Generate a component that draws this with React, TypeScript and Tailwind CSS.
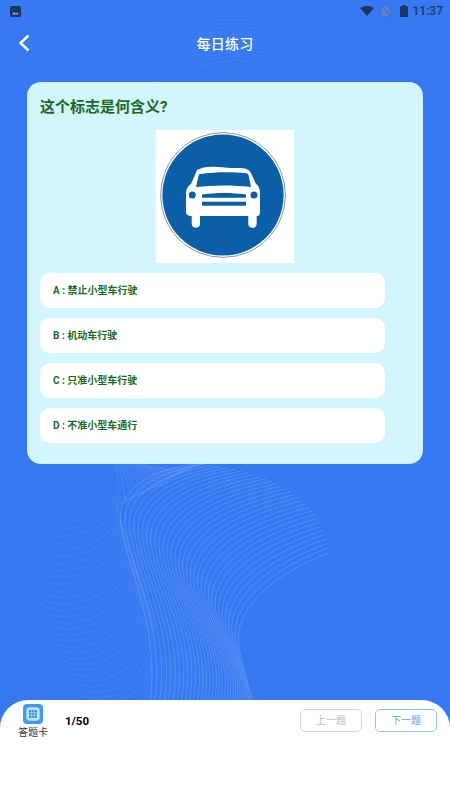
const options = [
  { key: 'A', text: '禁止小型车行驶' },
  { key: 'B', text: '机动车行驶' },
  { key: 'C', text: '只准小型车行驶' },
  { key: 'D', text: '不准小型车通行' },
];

type Pt = [number, number];

// quadratic blend through three key curves, t = 0, 0.5, 1
const blend = (a: number, b: number, c: number, t: number) =>
  a * (2 * t - 1) * (t - 1) + b * 4 * t * (1 - t) + c * t * (2 * t - 1);

function family(k0: Pt[], k1: Pt[], k2: Pt[], count: number) {
  const lines: string[] = [];
  for (let i = 0; i < count; i++) {
    const t = i / (count - 1);
    const p = k0.map((pt, n) =>
      `${blend(pt[0], k1[n][0], k2[n][0], t).toFixed(1)} ${blend(pt[1], k1[n][1], k2[n][1], t).toFixed(1)}`,
    );
    lines.push(`M${p[0]} C${p[1]} ${p[2]} ${p[3]} C${p[4]} ${p[5]} ${p[6]}`);
  }
  return lines;
}

const mainWave = family(
  [[198, 463], [150, 470], [112, 490], [122, 530], [130, 575], [160, 630], [150, 704]],
  [[293, 493], [240, 505], [178, 530], [185, 575], [190, 610], [225, 650], [212, 704]],
  [[328, 553], [285, 570], [238, 600], [238, 640], [240, 660], [248, 680], [253, 704]],
  32,
);
const leftWave = family(
  [[116, 497], [105, 497], [95, 500], [88, 503], [82, 506], [76, 510], [70, 515]],
  [[122, 525], [142, 575], [115, 607], [72, 613], [58, 615], [45, 612], [32, 600]],
  [[135, 575], [175, 650], [150, 690], [120, 700], [110, 703], [100, 704], [90, 704]],
  32,
);
const topWave = family(
  [[115, 463], [120, 480], [118, 490], [118, 505], [125, 500], [165, 485], [195, 463]],
  [[128, 463], [140, 475], [150, 480], [165, 480], [172, 478], [185, 470], [195, 463]],
  [[140, 463], [160, 470], [180, 470], [205, 463], [205, 463], [205, 463], [205, 463]],
  14,
);
const headerWave = family(
  [[185, 25], [200, 18], [225, 15], [245, 16], [255, 17], [265, 19], [272, 22]],
  [[166, 55], [190, 42], [215, 38], [235, 38], [248, 38], [260, 40], [272, 44]],
  [[148, 84], [180, 70], [210, 62], [235, 60], [245, 60], [258, 62], [270, 66]],
  13,
);

function WaveBackground() {
  return (
    <svg className="absolute inset-0" width="450" height="800" viewBox="0 0 450 800" fill="none">
      <g stroke="#ffffff" strokeWidth="1">
        <g opacity="0.15">{mainWave.map((d, i) => <path key={i} d={d} />)}</g>
        <g opacity="0.06">{leftWave.map((d, i) => <path key={i} d={d} />)}</g>
        <g opacity="0.1">{topWave.map((d, i) => <path key={i} d={d} />)}</g>
        <g opacity="0.05">{headerWave.map((d, i) => <path key={i} d={d} />)}</g>
      </g>
    </svg>
  );
}

function StatusBar() {
  return (
    <div className="flex h-[22px] items-center justify-between pl-[10px] pr-[7px] text-[#1d3466]">
      <svg width="11" height="11" viewBox="0 0 11 11">
        <rect width="11" height="11" rx="1.5" fill="#1d3466" />
        <path d="M2 8.5 4 6l1.5 1.6L7 6.6l2 1.9z" fill="#8fa8d8" />
      </svg>
      <div className="flex items-center">
        <svg width="14" height="10" viewBox="0 0 14 10">
          <path d="M0 2C2 0.7 4.5 0 7 0s5 0.7 7 2L7 10z" fill="#1d3466" />
        </svg>
        <svg className="ml-[7px]" width="10" height="12" viewBox="0 0 10 12">
          <path d="M1 1h5l3 3v7H1z" fill="#5f82c8" />
          <path d="M0.5 0.5 9.5 11.5" stroke="#3f61a8" strokeWidth="1" />
        </svg>
        <svg className="ml-[9px]" width="8" height="12" viewBox="0 0 8 12">
          <path d="M2.5 0h3v1.2H8V12H0V1.2h2.5z" fill="#1d3466" />
        </svg>
        <span className="ml-[5px] text-[12px] font-medium leading-none">11:37</span>
      </div>
    </div>
  );
}

function CarSign() {
  return (
    <div className="flex h-[133px] w-[138px] items-start justify-start bg-white pl-[4px] pt-[2px]">
      <svg width="126" height="126" viewBox="0 0 126 126">
        <circle cx="63" cy="63" r="62.4" fill="#ffffff" stroke="#8b97a3" strokeWidth="1" />
        <circle cx="63" cy="63" r="60.6" fill="#0b5ea8" />
        <path
          d="M37 38C42 35 50 34 58 35C64 35.5 70 36 78 36C85 36 89 37 91 41L96 52C99 54 100 57 100 62V80C100 83 99 84 96.7 84V92C96.7 97 88.3 97 88.3 92V84H40V92C40 97 31.7 97 31.7 92V84C28 84 26 82 26 80V62C26 57 28 54 31 52Z"
          fill="#ffffff"
        />
        <path d="M40 42C55 40 72 40 85 41C87 41 88 42 88.5 43L91 55C72 53 54 53 36 55L38.5 44C38.7 43 39 42 40 42Z" fill="#0b5ea8" />
        <circle cx="32.3" cy="63" r="3.5" fill="#0b5ea8" />
        <circle cx="94" cy="63" r="3.5" fill="#0b5ea8" />
        <path d="M42 62.5C56 60.5 72 60.5 86 62.5V65.7H42Z" fill="#0b5ea8" />
        <rect x="42" y="69.7" width="44" height="4" fill="#0b5ea8" />
      </svg>
    </div>
  );
}

function CardIcon() {
  return (
    <div className="flex h-5 w-5 items-center justify-center rounded-[4px] bg-[#3f9cf0]">
      <svg width="14" height="14" viewBox="0 0 14 14" fill="none">
        <rect x="0.7" y="0.7" width="12.6" height="12.6" rx="2.5" fill="#bfe6fb" stroke="#a8dcfa" />
        <rect x="3" y="3" width="8" height="8" fill="#3f8fe6" />
        <path d="M5.7 3v8M8.3 3v8M3 5.7h8M3 8.3h8" stroke="#bfe6fb" strokeWidth="0.6" />
      </svg>
    </div>
  );
}

export default function App() {
  return (
    <div className="relative flex h-[800px] w-full flex-col overflow-hidden bg-[#3779f2] font-['Roboto','Noto_Sans_CJK_SC',sans-serif]">
      <WaveBackground />

      <div className="relative flex flex-1 flex-col">
        <StatusBar />

        {/* Nav */}
        <div className="relative flex h-[44px] items-center justify-center">
          <svg className="absolute left-[18px] top-[12px]" width="12" height="18" viewBox="0 0 12 18" fill="none">
            <path d="M10.5 1.5 2.5 9l8 7.5" stroke="#ffffff" strokeWidth="2.4" />
          </svg>
          <h1 className="text-[14px] font-medium tracking-[0.2px] text-white">每日练习</h1>
        </div>

        {/* Question card */}
        <div className="mx-[27px] mt-[16px] h-[382px] rounded-[14px] bg-[#d3f5fd] px-[13px] pt-[13px]">
          <h2 className="text-[15px] font-bold leading-[24px] text-[#1a6b22]">这个标志是何含义?</h2>
          <div className="mt-[11px] flex justify-center">
            <CarSign />
          </div>
          <div className="mt-[10px] flex flex-col gap-[10px]">
            {options.map(o => (
              <div
                key={o.key}
                className="flex h-[35px] w-[345px] items-center rounded-[10px] bg-white pl-[13px] text-[10px] font-bold text-[#1a6b22]"
              >
                {o.key} : {o.text}
              </div>
            ))}
          </div>
        </div>
      </div>

      {/* Bottom bar */}
      <div className="relative flex h-[100px] items-start rounded-t-[28px] bg-white pt-[4px]">
        <div className="ml-[18px] flex w-[30px] flex-col items-center">
          <CardIcon />
          <span className="mt-[2px] text-[10px] leading-[14px] text-[#333333]">答题卡</span>
        </div>
        <span className="ml-[17px] mt-[9px] text-[11.5px] font-bold leading-[16px] text-black">1/50</span>
        <div className="ml-auto mr-[13px] mt-[5px] flex gap-[13px]">
          <button className="h-[23px] w-[62px] rounded-[5px] border-[1.5px] border-[#d3d8dd] text-[10px] text-[#b5bcc4]">上一题</button>
          <button className="h-[23px] w-[62px] rounded-[5px] border-[1.5px] border-[#8cc5ec] text-[10px] text-[#5aa5df]">下一题</button>
        </div>
      </div>
    </div>
  );
}
